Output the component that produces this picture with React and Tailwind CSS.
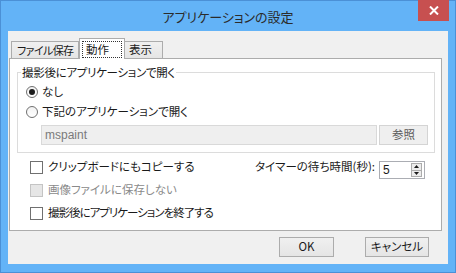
const font = "font-['Noto_Sans_CJK_JP','Noto_Sans',sans-serif] [font-feature-settings:'palt']";

function Radio({ checked, label }) {
  return (
    <div className="flex items-center h-[20px] gap-[4px]">
      <div className="w-[12px] h-[12px] rounded-full border border-[#707070] bg-gradient-to-b from-[#f2f2f2] to-[#ffffff] flex items-center justify-center">
        {checked && <div className="w-[6px] h-[6px] rounded-full bg-[#1c1c1c]" />}
      </div>
      <span className="text-[11.5px] text-[#1a1a1a] leading-none whitespace-nowrap">{label}</span>
    </div>
  );
}

function Check({ label, disabled, tight }) {
  let cls = "text-[11.5px] leading-none whitespace-nowrap";
  cls += disabled ? " text-[#8a8a8a]" : " text-[#1a1a1a]";
  if (tight) cls += " tracking-[-1px]";
  return (
    <div className="flex items-center h-[20px] gap-[5px]">
      <div
        className={
          disabled
            ? "w-[13px] h-[13px] border border-[#c4c4c4] bg-[#e6e6e6]"
            : "w-[13px] h-[13px] border border-[#707070] bg-white"
        }
      />
      <span className={cls}>{label}</span>
    </div>
  );
}

export default function App() {
  return (
    <div className={`w-[456px] h-[273px] bg-[#63b3f7] border border-[#4b90d6] flex flex-col ${font}`}>
      {/* title bar */}
      <div className="relative h-[30px] flex items-center justify-center">
        <span className="text-[13px] text-[#2b2b2b] leading-none">アプリケーションの設定</span>
        <div className="absolute -top-[1px] right-[6px] w-[31px] h-[21px] bg-[#c75050] flex items-center justify-center">
          <svg width="10" height="9" viewBox="0 0 10 9">
            <path d="M1 0.5 L9 8.5 M9 0.5 L1 8.5" stroke="#ffffff" strokeWidth="2" />
          </svg>
        </div>
      </div>

      {/* client */}
      <div className="mx-[7px] h-[233px] bg-[#f0f0f0] flex flex-col pt-[7px] px-[1px]">
        <div className="flex items-end pl-[2px] text-[11.5px] leading-none whitespace-nowrap">
          <div className="w-[68px] h-[17px] border border-b-0 border-[#acacac] bg-gradient-to-b from-[#f0f0f0] to-[#e5e5e5] pl-[5px] flex items-center text-[11px] tracking-[-0.6px] text-[#1a1a1a]">
            ファイル保存
          </div>
          <div className="relative z-10 w-[46px] h-[21px] -mb-[1px] border border-b-0 border-[#acacac] bg-white p-[2px] pb-[1px]">
            <div className="w-full h-full border border-dotted border-[#333] flex items-center pl-[3px] text-[#1a1a1a]">動作</div>
          </div>
          <div className="w-[38px] h-[17px] border border-b-0 border-l-0 border-[#acacac] bg-gradient-to-b from-[#f0f0f0] to-[#e5e5e5] pl-[4px] flex items-center text-[#1a1a1a]">
            表示
          </div>
        </div>

        {/* panel */}
        <div className="w-[433px] h-[173px] border border-[#acacac] bg-white flex flex-col">
          <div className="relative ml-[7px] mt-[13px] w-[418px] h-[81px] border border-[#dcdcdc] pl-[8px] pt-[9px]">
            <span className="absolute -top-[8px] left-[3px] bg-white px-[1px] text-[11.5px] leading-[14px] tracking-[-0.3px] whitespace-nowrap text-[#1a1a1a]">
              撮影後にアプリケーションで開く
            </span>
            <Radio checked label="なし" />
            <Radio label="下記のアプリケーションで開く" />
            <div className="flex mt-[3px] ml-[15px] gap-[2px]">
              <div className="w-[336px] h-[20px] border border-[#d9d9d9] bg-[#efefef] flex items-center pl-[3px] text-[12px] leading-none text-[#7a7a7a] font-['Liberation_Sans','Noto_Sans',sans-serif]">
                mspaint
              </div>
              <div className="w-[49px] h-[20px] border border-[#d4d4d4] bg-[#efefef] flex items-center justify-center text-[11.5px] leading-none text-[#5a5a5a]">
                参照
              </div>
            </div>
          </div>

          <div className="flex justify-between mt-[4px] pl-[20px] pr-[16px]">
            <div className="flex flex-col gap-[3px]">
              <Check label="クリップボードにもコピーする" />
              <Check label="画像ファイルに保存しない" disabled />
              <Check label="撮影後にアプリケーションを終了する" tight />
            </div>
            <div className="flex items-start gap-[4px]">
              <span className="h-[20px] flex items-center text-[11.5px] leading-none whitespace-nowrap text-[#1a1a1a]">タイマーの待ち時間(秒):</span>
              <div className="mt-[4px] w-[46px] h-[18px] border border-[#abadb3] bg-white flex items-center justify-between pl-[3px] pr-[2px]">
                <span className="text-[12px] leading-none text-[#1a1a1a] font-['Liberation_Sans',sans-serif]">5</span>
                <div className="w-[11px] h-[14px] border border-[#acacac] bg-[#ececec] flex flex-col">
                  <div className="flex-1 flex items-center justify-center border-b border-[#acacac]">
                    <svg width="5" height="3" viewBox="0 0 5 3"><path d="M2.5 0 L5 3 L0 3 Z" fill="#1a1a1a" /></svg>
                  </div>
                  <div className="flex-1 flex items-center justify-center">
                    <svg width="5" height="3" viewBox="0 0 5 3"><path d="M0 0 L5 0 L2.5 3 Z" fill="#1a1a1a" /></svg>
                  </div>
                </div>
              </div>
            </div>
          </div>
        </div>

        {/* buttons */}
        <div className="flex justify-end gap-[31px] mt-[6px] pr-[18px]">
          <div className="w-[55px] h-[20px] border border-[#acacac] bg-gradient-to-b from-[#f0f0f0] to-[#e5e5e5] flex items-center justify-center text-[11.5px] leading-none text-[#1a1a1a]">
            OK
          </div>
          <div className="w-[64px] h-[20px] border border-[#acacac] bg-gradient-to-b from-[#f0f0f0] to-[#e5e5e5] flex items-center justify-center text-[11.5px] leading-none text-[#1a1a1a]">
            キャンセル
          </div>
        </div>
      </div>
    </div>
  );
}
